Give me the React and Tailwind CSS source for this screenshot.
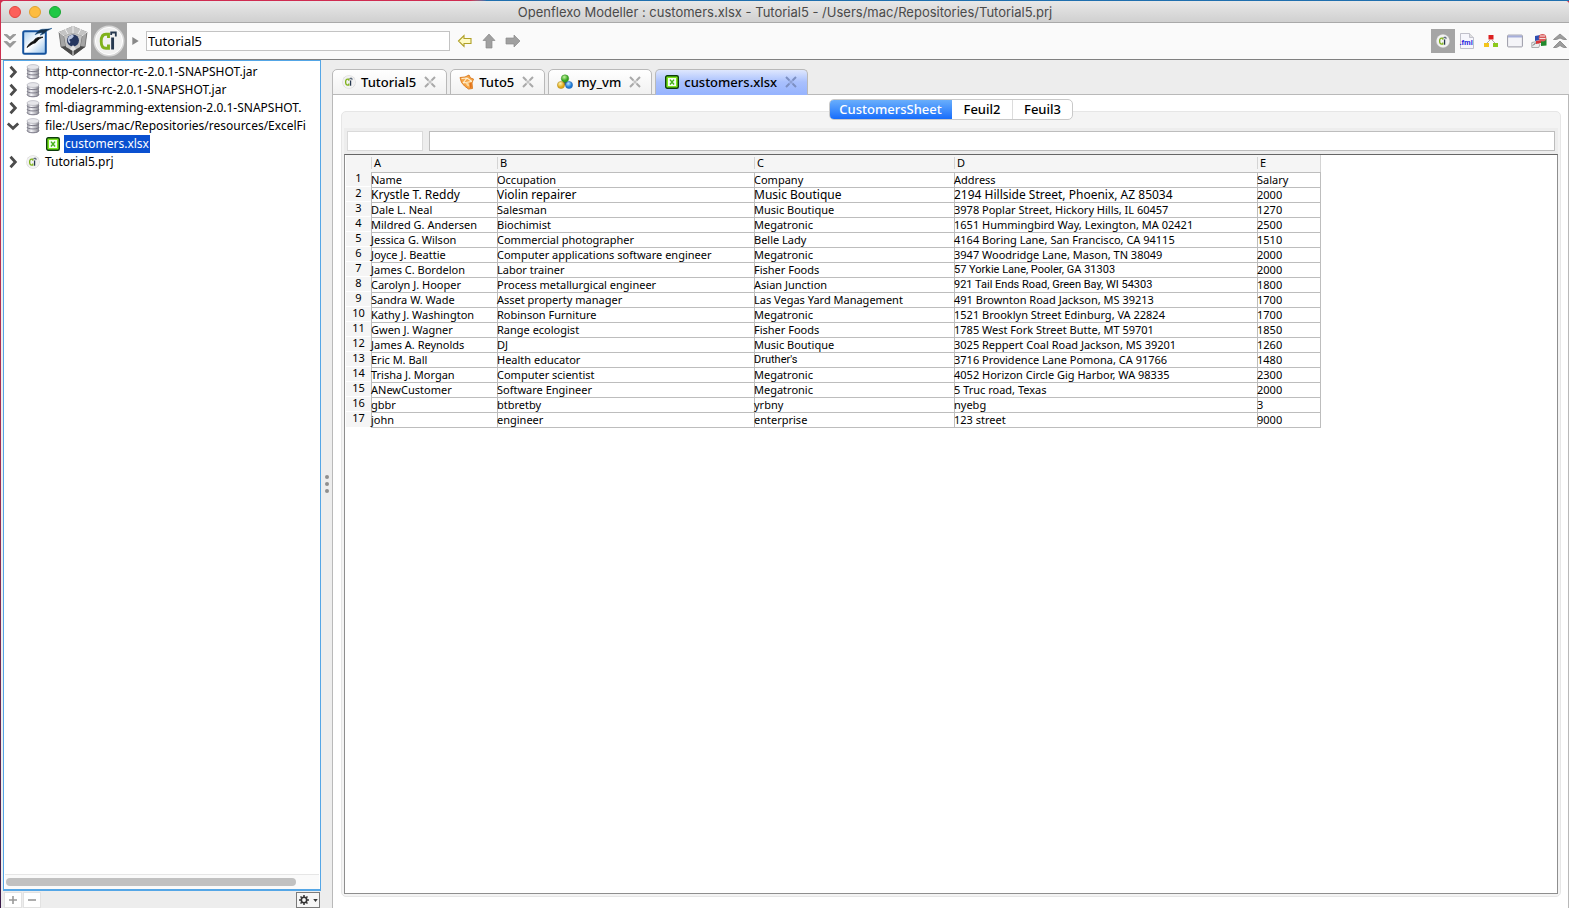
import React from "react";

const rows = [
  ["Name", "Occupation", "Company", "Address", "Salary"],
  ["Krystle T. Reddy", "Violin repairer", "Music Boutique", "2194 Hillside Street, Phoenix, AZ 85034", "2000"],
  ["Dale L. Neal", "Salesman", "Music Boutique", "3978 Poplar Street, Hickory Hills, IL 60457", "1270"],
  ["Mildred G. Andersen", "Biochimist", "Megatronic", "1651 Hummingbird Way, Lexington, MA 02421", "2500"],
  ["Jessica G. Wilson", "Commercial photographer", "Belle Lady", "4164 Boring Lane, San Francisco, CA 94115", "1510"],
  ["Joyce J. Beattie", "Computer applications software engineer", "Megatronic", "3947 Woodridge Lane, Mason, TN 38049", "2000"],
  ["James C. Bordelon", "Labor trainer", "Fisher Foods", "57 Yorkie Lane, Pooler, GA 31303", "2000"],
  ["Carolyn J. Hooper", "Process metallurgical engineer", "Asian Junction", "921 Tail Ends Road, Green Bay, WI 54303", "1800"],
  ["Sandra W. Wade", "Asset property manager", "Las Vegas Yard Management", "491 Brownton Road Jackson, MS 39213", "1700"],
  ["Kathy J. Washington", "Robinson Furniture", "Megatronic", "1521 Brooklyn Street Edinburg, VA 22824", "1700"],
  ["Gwen J. Wagner", "Range ecologist", "Fisher Foods", "1785 West Fork Street Butte, MT 59701", "1850"],
  ["James A. Reynolds", "DJ", "Music Boutique", "3025 Reppert Coal Road Jackson, MS 39201", "1260"],
  ["Eric M. Ball", "Health educator", "Druther's", "3716 Providence Lane Pomona, CA 91766", "1480"],
  ["Trisha J. Morgan", "Computer scientist", "Megatronic", "4052 Horizon Circle Gig Harbor, WA 98335", "2300"],
  ["ANewCustomer", "Software Engineer", "Megatronic", "5 Truc road, Texas", "2000"],
  ["gbbr", "btbretby", "yrbny", "nyebg", "3"],
  ["john", "engineer", "enterprise", "123 street", "9000"],
];

const largeCells = new Set(["1-0", "1-1", "1-2", "1-3"]);
const altFontCells = new Set(["6-3", "7-3", "12-2"]);

function OpenflexoIcon({ className }) {
  return (
    <svg viewBox="0 0 32 32" className={className} aria-hidden="true">
      <circle cx="16" cy="16" r="15.500" fill="#d6d6d6" />
      <circle cx="16" cy="16" r="13.600" fill="#f1f1f1" stroke="#fff" strokeWidth="1" />
      <path d="M15.500 13V9.200h-2.500c-3 0-4.800 2.300-4.800 7s1.800 7 4.800 7h2.500V19.500" fill="none" stroke="#80b21c" strokeWidth="2.900" />
      <path d="M19.600 12.500v12" fill="none" stroke="#26384f" strokeWidth="2.900" />
      <path d="M18.200 10V7.500h4.600v4" fill="none" stroke="#26384f" strokeWidth="1.800" />
    </svg>
  );
}

function DatabaseIcon() {
  return (
    <svg viewBox="0 0 14 16" className="h-4 w-[14px] shrink-0" aria-hidden="true">
      <defs>
        <linearGradient id="db" x1="0" x2="1">
          <stop offset="0" stopColor="#9d9da5" />
          <stop offset=".35" stopColor="#f6f6fa" />
          <stop offset="1" stopColor="#85858d" />
        </linearGradient>
      </defs>
      <path d="M1 3v9.500c0 3.300 12 3.300 12 0V3z" fill="url(#db)" />
      <path d="M1 5.700c0 2.600 12 2.600 12 0M1 9c0 2.600 12 2.600 12 0M1 12.300c0 3.300 12 3.300 12 0" fill="none" stroke="#7c7a88" strokeWidth="1" />
      <ellipse cx="7" cy="3" rx="6" ry="2.400" fill="#e6e6ea" stroke="#b3b3bb" strokeWidth=".7" />
    </svg>
  );
}

function ExcelIcon() {
  return (
    <svg viewBox="0 0 14 14" className="size-[14px] shrink-0" aria-hidden="true">
      <rect x=".7" y=".7" width="12.600" height="12.600" rx="1.500" fill="#7be51e" stroke="#0b3d0b" strokeWidth="1.400" />
      <rect x="3" y="3" width="8" height="8" fill="#f4fff0" />
      <path d="M5 4.600l4 4.900M9 4.600L5 9.500" stroke="#45b01a" strokeWidth="1.500" />
    </svg>
  );
}

function OrangeIcon() {
  return (
    <svg viewBox="0 0 16 16" className="size-4 shrink-0" aria-hidden="true">
      <path d="M1 3.500L6 3l4-2 1.500 3 3 1L13 9l.5 5.500-4 .5-4-3-3-3.500z" fill="#f6a546" stroke="#d9781c" strokeWidth=".9" />
      <path d="M2.500 4.500L8 4l5 3.500M4 9l4-5M4 9l8.500-1.500" fill="none" stroke="#fff0d2" strokeWidth="1.200" />
      <path d="M6 8.800l3-.6 1.500 4.300-2-.6z" fill="#fbd9a0" />
      <path d="M10.500 9l2-.5.300 5-1.800.5z" fill="#e2711a" />
    </svg>
  );
}

function SpheresIcon() {
  return (
    <svg viewBox="0 0 16 16" className="size-4 shrink-0" aria-hidden="true">
      <defs>
        <radialGradient id="sg" cx=".4" cy=".3"><stop offset="0" stopColor="#c5f5a0" /><stop offset="1" stopColor="#35a41f" /></radialGradient>
        <radialGradient id="sy" cx=".4" cy=".3"><stop offset="0" stopColor="#fff6b5" /><stop offset="1" stopColor="#e0aa1a" /></radialGradient>
        <radialGradient id="sb" cx=".4" cy=".3"><stop offset="0" stopColor="#b5e6ff" /><stop offset="1" stopColor="#1c78d6" /></radialGradient>
      </defs>
      <path d="M5.500 8.500L8 5l3.500 4-4 2.500z" fill="#47545f" />
      <circle cx="8" cy="4.500" r="3.700" fill="url(#sg)" stroke="#2f8a20" strokeWidth=".5" />
      <circle cx="4" cy="11" r="3.600" fill="url(#sy)" stroke="#a88418" strokeWidth=".5" />
      <circle cx="12" cy="11" r="3.600" fill="url(#sb)" stroke="#1b5ea8" strokeWidth=".5" />
    </svg>
  );
}

function Chevron({ open }) {
  return (
    <button aria-label={open ? "Collapse" : "Expand"} className="flex h-[18px] w-4 shrink-0 items-center justify-center">
      <svg viewBox="0 0 14 14" className="size-[14px]" aria-hidden="true">
        <path d={open ? "M1.800 4.500L7 9.300l5.200-4.800" : "M4.500 1.800L9.300 7l-4.800 5.200"} fill="none" stroke="#4c4c4c" strokeWidth="2.800" />
      </svg>
    </button>
  );
}

function TreeItem({ open, icon, label }) {
  return (
    <li className="flex h-[18px] items-center whitespace-nowrap pl-[1px]">
      <Chevron open={open} />
      <span className="flex w-6 shrink-0 justify-center">{icon}</span>
      <span>{label}</span>
    </li>
  );
}

function Tab({ icon, label, active }) {
  return (
    <div
      className={
        "flex h-[26px] items-center rounded-t-[5px] border border-[#b9b9b9] px-[9px] " +
        (active ? "border-b-[#97b4fe] bg-linear-to-b from-[#dfe7fd] via-[#a9c0fd] via-50% to-[#97b4fe]" : "bg-linear-to-b from-white to-[#f1f1f1]")
      }
    >
      <button className="flex items-center gap-[5px] text-[13px] font-medium leading-4">
        <span className="flex w-[14px] justify-center">{icon}</span>
        {label}
      </button>
      <button aria-label={"Close " + label} className="ml-2 mr-[1px]">
        <svg viewBox="0 0 12 12" className="size-3" aria-hidden="true">
          <path d="M1 1l3.500 3.500M7.500 7.500L11 11M11 1L7.500 4.500M4.500 7.500L1 11" fill="none" stroke={active ? "#7c8fc2" : "#a9a9a9"} strokeWidth="2" />
          <path d="M4 4l4 4M8 4L4 8" fill="none" stroke={active ? "#8ea1d6" : "#c4c4c4"} strokeWidth="1.500" />
        </svg>
      </button>
    </div>
  );
}

function TitleBar() {
  return (
    <header className="relative flex h-[22px] shrink-0 items-center rounded-t-[4px] border-b border-[#a9a9a9] bg-linear-to-b from-[#e8e8e8] to-[#d0d0d0] px-2">
      <div className="flex gap-2">
        <button aria-label="Close window" className="size-3 rounded-full border border-[#e2463f] bg-[#fc605b]" />
        <button aria-label="Minimize window" className="size-3 rounded-full border border-[#e0a02f] bg-[#fdbc40]" />
        <button aria-label="Zoom window" className="size-3 rounded-full border border-[#1ba634] bg-[#1fc845]" />
      </div>
      <h1 className="flex-1 pr-[52px] text-center font-['Inter',sans-serif] text-[13px] leading-4 text-[#4a4a4a]">
        Openflexo Modeller : customers.xlsx - Tutorial5 - /Users/mac/Repositories/Tutorial5.prj
      </h1>
    </header>
  );
}

function Toolbar() {
  return (
    <div className="flex h-[37px] shrink-0 items-center border-b border-[#808080] bg-[#fafafa]">
      <button aria-label="Collapse toolbar" className="ml-[2px] w-[14px]">
        <svg viewBox="0 0 14 16" className="h-4 w-[14px]" aria-hidden="true">
          <path d="M1 1.500h3l3 2.500 3-2.500h3L7 7zM1 8.500h3L7 11l3-2.500h3L7 14.500z" fill="#9b9b9b" stroke="#777" strokeWidth=".5" />
        </svg>
      </button>
      <button aria-label="Document module" className="ml-[2px] flex h-9 w-9 items-center justify-center">
        <svg viewBox="0 0 32 32" className="size-8" aria-hidden="true">
          <defs><linearGradient id="oo" x1="0" y1="0" x2="1" y2="1"><stop offset="0" stopColor="#a9cff0" /><stop offset=".5" stopColor="#fff" /><stop offset="1" stopColor="#8fbde8" /></linearGradient></defs>
          <rect x="2.200" y="6.200" width="22.600" height="22.600" rx="1.500" fill="url(#oo)" stroke="#15539e" strokeWidth="2" />
          <path d="M6 22.500c2-3.800 4-5.300 6.500-6.200 1.500-3 4-4.300 9.500-4.100-3 .9-4.800 2.200-6.300 4.300-1.200 1.700-2.400 1.600-3.700 2-1.800 1.200-3.500 2.300-6 4z" fill="#111" stroke="#111" strokeWidth=".8" />
          <path d="M14 9.800c2.800-4 4.800-5.500 8.500-5.600 3.500 0 5.500-.2 8.500-.9-2.500 1.500-4.300 2-5.800 3.500-1.700 1.700-3 2.600-6.200 3.400 1-.8 1.600-1.400 2.200-2.400C18.500 7.900 16.500 8.500 14 9.800z" fill="#14304a" stroke="#1d5c9a" strokeWidth=".5" />
        </svg>
      </button>
      <button aria-label="Technology module" className="flex h-9 w-9 items-center justify-center">
        <svg viewBox="0 0 32 32" className="size-8" aria-hidden="true">
          <path d="M16 1l14 6-2 15-12 9L4 22 2 7z" fill="#777" />
          <path d="M16 1l14 6-5 4-9-3-9 3-5-4z" fill="#c4c4c4" />
          <path d="M2 7l5 4 2 11-5 0zM30 7l-5 4-2 11 5 0z" fill="#a4a4a4" stroke="#666" strokeWidth=".7" />
          <path d="M4 22l5-1 7 5 7-5 5 1-12 9z" fill="#4a4a4a" />
          <path d="M7 11l9-3 9 3-2 11-7 4-7-4z" fill="#c2c2c2" />
          <circle cx="16" cy="15.500" r="6" fill="#25365f" />
          <path d="M11.500 12c1.500-2 4-2.500 5-1.500 1 1-1 2-1.500 3l-2.500 1c-.5 1 .5 1.500 1 2.500l-1 1.500c-1.800-1.600-2.200-4.500-1-6.500z" fill="#b7c3de" />
          <path d="M16 1v7M2 7l5 4M30 7l-5 4M16 26v5M8 4l3 5M24 4l-3 5" stroke="#efefef" strokeWidth="1" />
          <path d="M13 24l3-4 3 4-3 2z" fill="#e4e4e4" />
        </svg>
      </button>
      <button aria-label="Openflexo module" className="flex h-9 w-9 items-center justify-center bg-[#a5a5a5]">
        <OpenflexoIcon className="size-8" />
      </button>
      <svg viewBox="0 0 8 10" className="ml-[5px] h-2 w-[7px]" aria-hidden="true"><path d="M0 0l8 5-8 5z" fill="#888" /></svg>
      <input aria-label="Current project" defaultValue="Tutorial5" className="ml-[7px] h-5 w-[304px] border border-[#c3c3c3] bg-white px-[1px] text-[13px] leading-4" />
      <div className="ml-[7px] flex gap-2">
        <button aria-label="Back">
          <svg viewBox="0 0 16 16" className="size-4" aria-hidden="true"><path d="M1.500 8L7 2.500v3h7v5H7v3z" fill="#fffbc4" stroke="#b0a028" strokeWidth="1.100" /></svg>
        </button>
        <button aria-label="Up">
          <svg viewBox="0 0 16 16" className="size-4" aria-hidden="true"><path d="M8 1l6 6.500h-3V15H5V7.500H2z" fill="#a0a0a0" stroke="#8a8a8a" strokeWidth=".7" /></svg>
        </button>
        <button aria-label="Forward">
          <svg viewBox="0 0 16 16" className="size-4" aria-hidden="true"><path d="M15 8L9 2v3H1v6h8v3z" fill="#a0a0a0" stroke="#8a8a8a" strokeWidth=".7" /></svg>
        </button>
      </div>
      <div className="ml-auto flex items-center">
        <button aria-label="Openflexo perspective" className="flex size-6 items-center justify-center bg-[#a5a5a5]"><OpenflexoIcon className="size-[14px]" /></button>
        <button aria-label="FML perspective" className="flex size-6 items-center justify-center">
          <svg viewBox="0 0 16 16" className="size-4" aria-hidden="true">
            <path d="M1.500.5h9l4 4v11h-13z" fill="#f6f6fc" stroke="#b9b9c4" strokeWidth=".9" />
            <path d="M10.500.5v4h4" fill="#ddd" stroke="#b9b9c4" strokeWidth=".8" />
            <text x="0.500" y="12" fontSize="7.500" fontWeight="bold" fill="#2222dd" fontFamily="Liberation Sans, sans-serif">.fml</text>
          </svg>
        </button>
        <button aria-label="Diagram perspective" className="flex size-6 items-center justify-center">
          <svg viewBox="0 0 16 16" className="size-4" aria-hidden="true">
            <path d="M7 7l-3 3M9 7l3 3" stroke="#aaa" strokeWidth="1" />
            <rect x="5.500" y="2" width="5" height="4.500" fill="#dc2020" />
            <rect x="1" y="10" width="5" height="4" fill="#f3c51c" />
            <rect x="10" y="10" width="5" height="4" fill="#8cc91d" />
          </svg>
        </button>
        <button aria-label="Window perspective" className="flex size-6 items-center justify-center">
          <svg viewBox="0 0 16 16" className="size-4" aria-hidden="true">
            <rect x=".6" y="2.100" width="14.800" height="11.800" rx=".8" fill="#f4f4f8" stroke="#9a9aa6" strokeWidth="1" />
            <path d="M1 3.500h14" stroke="#a6aeda" strokeWidth="2" />
          </svg>
        </button>
        <button aria-label="Locale perspective" className="flex size-6 items-center justify-center">
          <svg viewBox="0 0 16 16" className="size-4" aria-hidden="true">
            <path d="M.8 9.500l5-1 3 3-1 3H.8z" fill="#ededed" stroke="#999" strokeWidth=".8" />
            <path d="M2 12.500l3-3" stroke="#555" />
            <path d="M4 3l5-1v5l-5 1z" fill="#2d4fb2" />
            <path d="M5 8l5-1v3l-5 1z" fill="#d93636" />
            <path d="M10 7.500l5.500-2v7l-5.500.5z" fill="#21892d" />
            <circle cx="11.500" cy="4.800" r="3.800" fill="#d85a5a" />
            <path d="M9 3h5M8.500 5.500h6" stroke="#f7e0e0" />
          </svg>
        </button>
        <button aria-label="Expand toolbar" className="ml-px mr-px w-4">
          <svg viewBox="0 0 16 16" className="size-4" aria-hidden="true">
            <path d="M8 1l6.500 5.500h-3L8 5 4.500 6.500h-3zM8 8l6.500 6.500h-3L8 12.500l-3.500 2h-3z" fill="#9c9c9c" stroke="#8a8a8a" strokeWidth=".9" />
          </svg>
        </button>
      </div>
    </div>
  );
}

function Sidebar() {
  return (
    <aside className="ml-[2px] flex w-[318px] shrink-0 flex-col">
      <div className="flex min-h-0 flex-1 flex-col border border-b-2 border-[#54a6e6] bg-white">
        <ul className="min-h-0 flex-1 overflow-hidden pt-[2px] text-[12px] leading-4">
          <TreeItem icon={<DatabaseIcon />} label="http-connector-rc-2.0.1-SNAPSHOT.jar" />
          <TreeItem icon={<DatabaseIcon />} label="modelers-rc-2.0.1-SNAPSHOT.jar" />
          <TreeItem icon={<DatabaseIcon />} label="fml-diagramming-extension-2.0.1-SNAPSHOT." />
          <TreeItem open icon={<DatabaseIcon />} label="file:/Users/mac/Repositories/resources/ExcelFi" />
          <li className="flex h-[18px] items-center gap-1 pl-[42px]">
            <ExcelIcon />
            <span className="h-[18px] bg-[#0a50d0] px-[1px] leading-[18px] text-white">customers.xlsx</span>
          </li>
          <TreeItem icon={<OpenflexoIcon className="size-[14px]" />} label="Tutorial5.prj" />
        </ul>
        <div className="mx-[1px] flex h-[15px] shrink-0 items-center border-t border-[#e6e6e6] bg-[#fafafa] pl-[1px] pr-[23px]">
          <div className="h-2 w-full rounded-full bg-[#c1c1c1]" />
        </div>
      </div>
      <div className="flex h-[17px] shrink-0 items-start gap-[1px] px-[1px] pt-[1px]">
        <button aria-label="Add" className="flex h-4 w-[18px] items-center justify-center border border-[#e2e2e2] bg-white">
          <svg viewBox="0 0 8 8" className="size-2" aria-hidden="true"><path d="M4 0v8M0 4h8" stroke="#999" strokeWidth="1.600" /></svg>
        </button>
        <button aria-label="Remove" className="flex h-4 w-[18px] items-center justify-center border border-[#e2e2e2] bg-white">
          <svg viewBox="0 0 8 8" className="size-2" aria-hidden="true"><path d="M0 4h8" stroke="#999" strokeWidth="1.600" /></svg>
        </button>
        <button aria-label="Options" className="ml-auto flex h-4 w-6 items-center justify-center gap-1 border border-[#7a7a7a] bg-[#f6f6f6]">
          <svg viewBox="0 0 10 10" className="size-[10px]" aria-hidden="true">
            <circle cx="5" cy="5" r="2.700" fill="none" stroke="#333" strokeWidth="1.600" />
            <path d="M5 0v2M5 8v2M0 5h2M8 5h2M1.500 1.500l1.300 1.300M7.200 7.200l1.300 1.300M8.500 1.500L7.200 2.800M2.800 7.200L1.500 8.500" stroke="#333" strokeWidth="1.500" />
          </svg>
          <svg viewBox="0 0 6 4" className="h-[3px] w-[5px]" aria-hidden="true"><path d="M0 0h6L3 4z" fill="#333" /></svg>
        </button>
      </div>
    </aside>
  );
}

function Sheet() {
  return (
    <div className="min-h-0 flex-1 overflow-hidden border border-[#8e8e8e] border-t-[#666] bg-white pl-[1px]">
      <table className="w-[975px] table-fixed border-separate border-spacing-0 text-[11px]">
        <colgroup>
          <col className="w-[25px]" />
          <col className="w-[126px]" />
          <col className="w-[257px]" />
          <col className="w-[200px]" />
          <col className="w-[303px]" />
          <col className="w-[64px]" />
        </colgroup>
        <thead>
          <tr className="h-[17px] bg-[#f5f5f5]">
            <td />
            {["A", "B", "C", "D", "E"].map((c) => (
              <th key={c} scope="col" className="p-0 pt-[2px] text-left align-top font-normal last:border-r last:border-[#d4d4d4]">
                <div className="h-3 border-l border-[#d4d4d4] pl-[2px] leading-3">{c}</div>
              </th>
            ))}
          </tr>
        </thead>
        <tbody>
          {rows.map((row, r) => (
            <tr key={r}>
              <th scope="row" className="h-[15px] border-b border-white bg-[#f5f5f5] p-0 text-center align-top font-normal leading-3">
                {r + 1}
              </th>
              {row.map((cell, c) => (
                <td
                  key={c}
                  className={
                    "h-[15px] border-l border-t border-[#bdbdbd] p-0 align-top -indent-px leading-[14px] whitespace-nowrap last:border-r " +
                    (r === rows.length - 1 ? "border-b " : "") +
                    (largeCells.has(r + "-" + c) ? "text-[12px] " : "") +
                    (altFontCells.has(r + "-" + c) ? "font-['Roboto',sans-serif]" : "")
                  }
                >
                  {cell}
                </td>
              ))}
            </tr>
          ))}
        </tbody>
      </table>
    </div>
  );
}

function Workspace() {
  return (
    <main className="flex min-w-0 flex-1 flex-col pt-[9px]">
      <nav aria-label="Open documents" className="relative z-10 -mb-px flex shrink-0 gap-[3px]">
        <Tab icon={<OpenflexoIcon className="size-[14px]" />} label="Tutorial5" />
        <Tab icon={<OrangeIcon />} label="Tuto5" />
        <Tab icon={<SpheresIcon />} label="my_vm" />
        <Tab icon={<ExcelIcon />} label="customers.xlsx" active />
      </nav>
      <section className="flex min-h-0 flex-1 flex-col border-x border-t border-[#b9b9b9] bg-white pb-[11px] pl-2 pr-[7px] pt-4">
        <div className="flex min-h-0 flex-1 flex-col rounded-[5px] border border-[#e6e6e6] bg-[#f4f4f4] px-[2px] pb-[2px]">
          <div className="-mt-[13px] flex h-[29px] shrink-0 justify-center">
            <div className="flex h-[21px] overflow-hidden rounded-[5px] border border-[#c9c9c9] bg-white text-[13px] font-medium leading-[19px]">
              <button className="-my-px -ml-px w-[123px] bg-linear-to-b from-[#6db1fb] to-[#0f68fb] text-white">CustomersSheet</button>
              <button className="w-[61px] border-r border-[#dcdcdc]">Feuil2</button>
              <button className="w-[59px]">Feuil3</button>
            </div>
          </div>
          <div className="flex min-h-0 flex-1 flex-col bg-[#ededed]">
            <div className="flex shrink-0 gap-[6px] px-[3px] py-[3px]">
              <input aria-label="Cell reference" className="h-5 w-[76px] border border-[#dadada] bg-white px-1 text-[12px]" />
              <input aria-label="Cell content" className="h-5 min-w-0 flex-1 border border-[#bdbdbd] bg-white px-1 text-[12px]" />
            </div>
            <Sheet />
          </div>
        </div>
      </section>
    </main>
  );
}

export default function App() {
  return (
    <div className="bg-linear-to-r from-[#cf2b50] from-30% to-[#1f6fae] to-31% pt-px">
      <div className="bg-linear-to-b from-[#d2304f] via-[#a02a50] to-[#3a1a4a] pl-px">
        <div className="flex h-[calc(100vh-1px)] flex-col rounded-t-[4px] bg-[#ededed] font-['Noto_Sans',sans-serif] text-black">
          <TitleBar />
          <Toolbar />
          <div className="flex min-h-0 flex-1">
            <Sidebar />
            <div role="separator" aria-orientation="vertical" className="flex w-[11px] shrink-0 flex-col items-center justify-center gap-[3px]">
              <span className="size-1 rounded-full bg-[#8f8f8f]" />
              <span className="size-1 rounded-full bg-[#8f8f8f]" />
              <span className="size-1 rounded-full bg-[#8f8f8f]" />
            </div>
            <Workspace />
          </div>
        </div>
      </div>
    </div>
  );
}
